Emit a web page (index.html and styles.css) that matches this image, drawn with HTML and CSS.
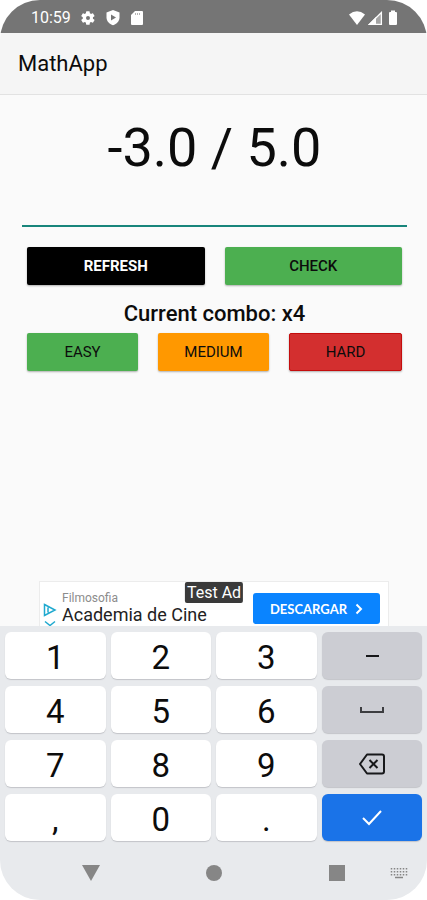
FILE: index.html
```html
<!DOCTYPE html>
<html lang="en">
<head>
<meta charset="utf-8">
<meta name="viewport" content="width=device-width, initial-scale=1">
<title>MathApp</title>
<link rel="stylesheet" href="styles.css">
</head>
<body>
<div class="screen">
  <div class="status">
    <div class="status-left">
      <span class="clock">10:59</span>
      <svg width="16" height="16" viewBox="0 0 24 24"><path fill="#fff" fill-rule="evenodd" d="M19.4 13a7.500 7.500 0 0 0 0-2l2.200-1.700c.2-.2.200-.4.100-.6l-2.100-3.600c-.1-.2-.4-.3-.6-.2l-2.500 1a7 7 0 0 0-1.700-1L14.400 2.200a.5.500 0 0 0-.5-.4H9.800a.5.500 0 0 0-.5.400L8.900 4.900a7 7 0 0 0-1.700 1l-2.500-1a.5.500 0 0 0-.6.200L2 8.700c-.1.200-.1.400.1.600L4.200 11a7.500 7.500 0 0 0 0 2l-2.100 1.700c-.2.200-.2.400-.1.600l2.100 3.600c.1.200.4.300.6.200l2.500-1a7 7 0 0 0 1.700 1l.4 2.700c0 .2.200.4.500.4h4.100c.3 0 .5-.2.500-.4l.4-2.700a7 7 0 0 0 1.700-1l2.500 1c.2.100.5 0 .6-.2l2.100-3.600c.1-.2.100-.4-.1-.6zM12 15a3 3 0 1 1 0-6 3 3 0 0 1 0 6z"/></svg>
      <svg width="16" height="17" viewBox="0 0 16 17"><path fill="#fff" d="M8 1l6.500 2.500v4.700c0 4-2.800 6.800-6.500 8-3.700-1.200-6.500-4-6.500-8V3.500z"/><path fill="#757575" d="M6 5.500l5 3-5 3z"/></svg>
      <svg width="14" height="16" viewBox="0 0 14 16"><path fill="#fff" d="M5 1h7q1 0 1 1v12q0 1-1 1H2q-1 0-1-1V5z"/><path stroke="#b5b5b5" d="M5.500 3v2M7.500 3v2M9.500 3v2"/></svg>
    </div>
    <div class="status-right">
      <svg width="18" height="16" viewBox="0 0 18 16"><path fill="#fff" d="M1 4.500Q9-2 17 4.500L9 15z"/></svg>
      <svg width="16" height="16" viewBox="0 0 16 16"><path fill="#fff" fill-opacity=".35" d="M15 1v14H1z"/><path fill="#fff" d="M9 7V15H1z"/><path fill="none" stroke="#fff" stroke-width="1.300" d="M14.400 2.500v11.900H2.500z"/></svg>
      <svg width="10" height="16" viewBox="0 0 10 16"><path fill="#fff" d="M3 .5h4V2h1q1 0 1 1v11q0 1-1 1H2q-1 0-1-1V3q0-1 1-1h1z"/></svg>
    </div>
  </div>
  <header class="appbar"><h1>MathApp</h1></header>
  <main>
    <p class="problem">-3.0 / 5.0</p>
    <input class="answer" type="text" inputmode="decimal" aria-label="Answer">
    <div class="actions">
      <button class="btn refresh">REFRESH</button>
      <button class="btn check">CHECK</button>
    </div>
    <p class="combo">Current combo: x4</p>
    <div class="actions levels">
      <button class="btn easy">EASY</button>
      <button class="btn medium">MEDIUM</button>
      <button class="btn hard">HARD</button>
    </div>
    <aside class="ad">
      <svg class="ad-marks" width="14" height="26" viewBox="0 0 14 26"><path fill="none" stroke="#1fa9cf" stroke-width="1.500" d="M1.500 1.500l10.500 5.500L1.500 12.500zM5 4.500v5M2 18.500l5 4 5-4"/></svg>
      <div class="ad-text">
        <span class="ad-brand">Filmosofia</span>
        <span class="ad-title">Academia de Cine</span>
      </div>
      <a class="ad-link" href="#">DESCARGAR
        <svg width="8" height="12" viewBox="0 0 8 12"><path fill="none" stroke="#fff" stroke-width="2" d="M1.500 1.500L6 6l-4.500 4.500"/></svg>
      </a>
      <span class="ad-badge">Test Ad</span>
    </aside>
  </main>
  <div class="keyboard">
    <div class="keys">
      <button class="key">1</button><button class="key">2</button><button class="key">3</button>
      <button class="key side" aria-label="Minus"><svg width="28" height="28" viewBox="0 0 28 28"><path stroke="#17181a" stroke-width="2" d="M8 14h13"/></svg></button>
      <button class="key">4</button><button class="key">5</button><button class="key">6</button>
      <button class="key side" aria-label="Space"><svg width="28" height="28" viewBox="0 0 28 28"><path fill="none" stroke="#3c3d40" stroke-width="2" d="M3 11v5h22v-5"/></svg></button>
      <button class="key">7</button><button class="key">8</button><button class="key">9</button>
      <button class="key side" aria-label="Backspace"><svg width="28" height="28" viewBox="0 0 28 28"><path fill="none" stroke="#17181a" stroke-width="2" stroke-linejoin="round" d="M9 4.500h15q2 0 2 2v15q0 2-2 2H9L2 14z"/><path stroke="#17181a" stroke-width="2" d="M11.500 10l8 8M19.500 10l-8 8"/></svg></button>
      <button class="key">,</button><button class="key">0</button><button class="key">.</button>
      <button class="key enter" aria-label="Done"><svg width="28" height="28" viewBox="0 0 28 28"><path fill="none" stroke="#fff" stroke-width="2" d="M5 14l6 6L23 7"/></svg></button>
    </div>
    <nav class="sysnav">
      <button aria-label="Back"><svg width="18" height="18" viewBox="0 0 18 18"><path fill="#868686" d="M0 1h18L9 17z"/></svg></button>
      <button aria-label="Home"><svg width="18" height="18" viewBox="0 0 18 18"><circle cx="9" cy="9" r="8" fill="#868686"/></svg></button>
      <button aria-label="Recent apps"><svg width="18" height="18" viewBox="0 0 18 18"><path fill="#868686" d="M1 1h16v16H1z"/></svg></button>
      <button class="ime" aria-label="Choose keyboard"><svg width="18" height="12" viewBox="0 0 18 12"><path stroke="#868686" stroke-width="1.500" stroke-dasharray="1.500 1.500" d="M.75 1.750h16.500M.75 4.750h16.500M.75 7.750h16.500"/><path stroke="#868686" stroke-width="1.500" d="M5 10.500h8"/></svg></button>
    </nav>
  </div>
</div>
</body>
</html>
```
FILE: styles.css
```css
* { box-sizing: border-box; }
body {
  margin: 0;
  background: #fff;
  color: #0c0c0c;
  font-family: Roboto, "Liberation Sans", sans-serif;
}
h1, p { margin: 0; font-weight: 400; }
button { border: 0; padding: 0; font: inherit; color: inherit; background: none; }
svg { display: block; flex: none; }

.screen {
  display: flex;
  flex-direction: column;
  min-height: 100vh;
  overflow: hidden;
  background: #fafafa;
  border-radius: 40px;
}
.status {
  display: flex;
  justify-content: space-between;
  align-items: center;
  height: 33px;
  padding: 2px 29px 0 31px;
  background: #757575;
  color: #fff;
}
.status-left { display: flex; align-items: center; gap: 9px; }
.status-right { display: flex; align-items: center; gap: 1px; }
.status-right svg:last-child { margin-left: 4px; }
.clock { font-size: 16px; }
.appbar {
  padding: 18px 18px 17px;
  background: #f5f5f5;
  border-bottom: 1px solid #e2e2e2;
}
.appbar h1 { font-size: 22px; line-height: 26px; }

main {
  display: flex;
  flex-direction: column;
  flex: 1;
  padding: 21px 20px 0 22px;
}
.problem { font-size: 54px; line-height: 64px; text-align: center; }
.answer {
  width: 100%;
  height: 47px;
  border: 0;
  border-bottom: 2px solid #18857b;
  background: none;
  font: inherit;
  font-size: 22px;
  outline: 0;
}
.actions { display: flex; gap: 20px; padding: 20px 5px 0; }
.levels { padding-top: 6px; }
.btn {
  flex: 1 1 0;
  height: 38px;
  border-radius: 2px;
  font-size: 15px;
  box-shadow: 0 1px 2px rgba(0, 0, 0, .3);
}
.refresh { background: #000; color: #fff; font-weight: 700; }
.check { background: #4caf50; font-weight: 500; }
.easy { background: #4caf50; }
.medium { background: #ff9800; }
.hard { background: #d32f2f; border: 1px solid #c40d0d; }
.combo { margin-top: 16px; font-size: 22px; line-height: 26px; font-weight: 500; text-align: center; }

.ad {
  position: relative;
  display: flex;
  align-items: flex-start;
  height: 45px;
  margin: auto 18px 0 17px;
  padding: 0 8px 0 3px;
  overflow: hidden;
  background: #fff;
  border: 1px solid #ececec;
  border-bottom: 0;
}
.ad-marks { margin-top: 21px; }
.ad-text {
  display: flex;
  flex-direction: column;
  flex: 1;
  padding: 9px 0 0 5px;
  white-space: nowrap;
}
.ad-brand { font-size: 12px; line-height: 14px; color: #8c8c8c; }
.ad-title { font-size: 18px; line-height: 20px; color: #222; }
.ad-link {
  display: flex;
  align-items: center;
  justify-content: center;
  gap: 8px;
  width: 127px;
  height: 31px;
  margin-top: 11px;
  border-radius: 3px;
  background: #0a84ff;
  color: #fff;
  font-family: Lato, sans-serif;
  font-size: 13px;
  font-weight: 700;
  text-decoration: none;
}
.ad-badge {
  position: absolute;
  top: 0;
  left: 50%;
  transform: translateX(-50%);
  padding: 0 2px;
  border-radius: 2px;
  background: #3a3a3a;
  color: #fff;
  font-size: 16px;
  line-height: 21px;
}

.keyboard { background: #e8eaed; }
.keys {
  display: grid;
  grid-template-columns: repeat(4, 1fr);
  gap: 7px 5px;
  padding: 6px 5px 0;
}
.key {
  display: flex;
  align-items: center;
  justify-content: center;
  height: 47px;
  padding-top: 4px;
  border-radius: 6px;
  background: #fff;
  box-shadow: 0 1px 1px #c2c4c8;
  font-size: 33px;
  line-height: 38px;
}
.side, .enter { padding-top: 1px; }
.side { background: #cccdd3; }
.enter { background: #1a73e8; }
.sysnav {
  display: grid;
  grid-template-columns: repeat(3, 1fr) 29px;
  align-items: center;
  justify-items: center;
  height: 59px;
  padding: 5px 0 0 29px;
}
.sysnav .ime { justify-self: end; margin-right: 19px; }
```
